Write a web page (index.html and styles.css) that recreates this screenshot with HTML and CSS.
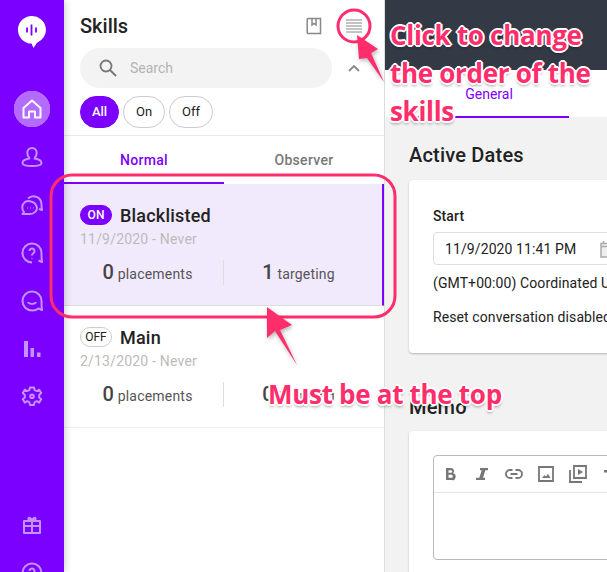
FILE: index.html
```html
<!DOCTYPE html>
<html lang="en">

<head>
    <meta charset="UTF-8">
    <meta name="viewport" content="width=device-width, initial-scale=1.0">
    <title>Skills</title>
    <link rel="stylesheet" href="styles.css">
</head>

<body>
    <div class="app">
        <!-- Main navigation -->
        <nav class="sidebar">
            <div class="logo">
                <svg width="30" height="34" viewBox="0 0 30 34">
                    <path d="M15 1a13.8 13.8 0 0 1 5 26.700L16.500 33 14.500 28.600A13.800 13.800 0 0 1 15 1z" fill="#fff" />
                    <path d="M10 12.500v5M14.500 9.500v11M19 12.500v5" stroke="#7b00ff" stroke-width="1.800" fill="none" />
                </svg>
            </div>
            <div class="nav-item active">
                <svg width="20" height="20" viewBox="0 0 20 20" class="nav-icon">
                    <path d="M1.500 9 10 1.500 18.500 9v9.500h-5.500v-6H7v6H1.500z" />
                </svg>
            </div>
            <div class="nav-item">
                <svg width="22" height="22" viewBox="0 0 22 22" class="nav-icon">
                    <path d="M11 2c3 0 4.700 2.300 4.700 5 0 2.300-1 4-2.200 5.500 3 .5 7 1.500 7 4.500 0 2-4 3-9.500 3s-9.500-1-9.500-3c0-3 4-4 7-4.500C7.300 11 6.300 9.300 6.300 7 6.300 4.300 8 2 11 2z" />
                </svg>
            </div>
            <div class="nav-item">
                <svg width="22" height="22" viewBox="0 0 22 22" class="nav-icon">
                    <path d="M7 4.500A8 8 0 0 1 20.500 10c0 2 0 4 .5 6l-3-1" />
                    <path d="M10 7.500a8 8 0 0 1 6 6.500c0 3-3 6-7 6H1.500l1.500-2a6.800 6.800 0 0 1 1-10 8 8 0 0 1 6-.5z" />
                    <path d="M6.500 14h.5M9.500 14h.5M12.500 14h.5" />
                </svg>
            </div>
            <div class="nav-item">
                <svg width="22" height="22" viewBox="0 0 22 22" class="nav-icon">
                    <path d="M11 20.500a9.500 9.500 0 1 1 9.500-9.500c0 3 0 6 .5 9l-3.500-1.500" />
                    <path d="M8.500 9a2.500 2.500 0 1 1 4 2c-1 .7-1.500 1.300-1.500 2.500M11 16v.5" />
                </svg>
            </div>
            <div class="nav-item">
                <svg width="22" height="22" viewBox="0 0 22 22" class="nav-icon">
                    <path d="M11 20.500a9.500 9.500 0 1 1 9.500-9.500c0 3 0 6 .5 9l-3.500-1.500A9.500 9.500 0 0 1 11 20.500z" />
                    <path d="M7 12c1 2.500 7 2.500 8 0" />
                </svg>
            </div>
            <div class="nav-item">
                <svg width="18" height="18" viewBox="0 0 18 18">
                    <path d="M1 1h4v16H1zM7.500 8h3.500v9H7.500zM14 12.500h3.500v4.500H14z" fill="#c294ff" />
                </svg>
            </div>
            <div class="nav-item">
                <svg width="22" height="22" viewBox="0 0 22 22" class="nav-icon">
                    <path d="M9 1.500h4l.6 2.600 2.300 1 2.300-1.400 2 3.400-2 1.800v2.500l2 1.800-2 3.400-2.300-1.400-2.300 1-.6 2.800H9l-.6-2.800-2.300-1-2.300 1.400-2-3.400 2-1.800V8.900l-2-1.800 2-3.400 2.300 1.400 2.300-1z" />
                    <circle cx="11" cy="10.200" r="1.800" />
                </svg>
            </div>
            <div class="nav-bottom">
                <div class="nav-item">
                    <svg width="18" height="18" viewBox="0 0 18 18" class="nav-icon">
                        <path d="M1 5h16v12H1zM1 10h16M9 5v12" />
                        <path d="M9 5C6 5 5 3.500 5.500 2.300S8 1.500 9 5c1-3.500 3-3.900 3.500-2.700S12 5 9 5z" />
                    </svg>
                </div>
                <div class="nav-item">
                    <svg width="22" height="22" viewBox="0 0 22 22" class="nav-icon">
                        <path d="M11 20.500a9.500 9.500 0 1 1 9.500-9.500c0 3 0 6 .5 9l-3.500-1.500" />
                        <path d="M8.500 9a2.500 2.500 0 1 1 4 2c-1 .7-1.500 1.300-1.500 2.500" />
                    </svg>
                </div>
            </div>
        </nav>

        <!-- Skill list -->
        <section class="skills-panel">
            <div class="panel-head">
                <h1>Skills</h1>
                <div class="panel-tools">
                    <svg width="16" height="18" viewBox="0 0 16 18" class="tool-icon">
                        <path d="M2 1.500h12.500v15H2a.8.800 0 0 1-.8-.8V2.300A.8.800 0 0 1 2 1.500z" />
                        <path d="M6 1.500v6.500l2-1.500 2 1.500V1.500" />
                    </svg>
                    <svg width="16" height="14" viewBox="0 0 16 14" class="tool-icon lines">
                        <path d="M0 1h16M0 4h16M0 7h16M0 10h16M0 13h16" />
                    </svg>
                </div>
            </div>
            <div class="search-row">
                <div class="search-box">
                    <svg width="18" height="18" viewBox="0 0 18 18" class="search-icon">
                        <circle cx="7" cy="7" r="5.500" />
                        <path d="m11 11 6 6" />
                    </svg>
                    <span>Search</span>
                </div>
                <svg width="12" height="7" viewBox="0 0 12 7" class="collapse-icon">
                    <path d="m1 6 5-5 5 5" />
                </svg>
            </div>
            <div class="filters">
                <span class="filter filter-all selected">All</span>
                <span class="filter filter-on">On</span>
                <span class="filter filter-off">Off</span>
            </div>
            <div class="tabs">
                <div class="tab current">Normal</div>
                <div class="tab">Observer</div>
            </div>

            <div class="skill selected">
                <div class="skill-title">
                    <span class="badge on">ON</span>
                    <span class="skill-name">Blacklisted</span>
                </div>
                <div class="skill-dates">11/9/2020 - Never</div>
                <div class="stats">
                    <div class="stat"><b>0</b> placements</div>
                    <div class="stat"><b>1</b> targeting</div>
                </div>
            </div>
            <div class="skill">
                <div class="skill-title">
                    <span class="badge">OFF</span>
                    <span class="skill-name">Main</span>
                </div>
                <div class="skill-dates">2/13/2020 - Never</div>
                <div class="stats">
                    <div class="stat"><b>0</b> placements</div>
                    <div class="stat"><b>0</b> targeting</div>
                </div>
            </div>
        </section>

        <!-- Skill detail -->
        <main class="detail">
            <div class="topbar"></div>
            <div class="detail-tabs">
                <div class="detail-tab">General</div>
            </div>
            <div class="detail-body">
                <h2>Active Dates</h2>
                <div class="card dates-card">
                    <div class="field-label">Start</div>
                    <div class="date-input">
                        <span>11/9/2020 11:41 PM</span>
                        <svg width="14" height="18" viewBox="0 0 14 18" class="calendar-icon">
                            <path d="M1 3.500h12v13.500H1zM3.500 1v3M10.500 1v3" />
                            <path d="M1 6.500h12" />
                        </svg>
                    </div>
                    <p>(GMT+00:00) Coordinated Universal Time</p>
                    <p>Reset conversation disabled</p>
                </div>
                <h2 class="memo-title">Memo</h2>
                <div class="card memo-card">
                    <div class="editor">
                        <div class="editor-tools">
                            <span class="editor-btn">
                                <svg width="14" height="14" viewBox="0 0 14 14" class="editor-icon">
                                    <path d="M3 1h5a3 3 0 0 1 2 5.300A3.300 3.300 0 0 1 8.500 13H3zM5.500 3.300v2.400H8a1.200 1.200 0 0 0 0-2.400zM5.500 7.800v3h2.800a1.500 1.500 0 0 0 0-3z" fill-rule="evenodd" />
                                </svg>
                            </span>
                            <span class="editor-btn">
                                <svg width="14" height="14" viewBox="0 0 14 14" class="editor-icon">
                                    <path d="M5 1h8v2.300h-2.700L8 10.700h2V13H1v-2.300h3.300l2.400-7.400H5z" />
                                </svg>
                            </span>
                            <span class="editor-btn">
                                <svg width="18" height="14" viewBox="0 0 18 14" class="editor-line">
                                    <path d="M7.500 3H5a4 4 0 0 0 0 8h2.500M10.500 3H13a4 4 0 0 1 0 8h-2.500M5.500 7h7" />
                                </svg>
                            </span>
                            <span class="editor-btn">
                                <svg width="16" height="16" viewBox="0 0 16 16" class="editor-line">
                                    <path d="M1 1h14v14H1z" />
                                    <path d="m4 12 2.500-3 1.500 1.500 2-2.500 2.500 4z" class="editor-fill" />
                                </svg>
                            </span>
                            <span class="editor-btn">
                                <svg width="18" height="18" viewBox="0 0 18 18" class="editor-line">
                                    <path d="M5 1h12v12H5z" />
                                    <path d="M1 5v12h12" />
                                    <path d="M9 4v6l5-3z" class="editor-fill" />
                                </svg>
                            </span>
                            <span class="editor-btn">
                                <svg width="14" height="14" viewBox="0 0 14 14" class="editor-icon">
                                    <path d="M1 3h12v2.500H8.500V13h-3V5.500H1z" />
                                </svg>
                            </span>
                        </div>
                        <div class="editor-area"></div>
                    </div>
                </div>
            </div>
        </main>

        <!-- Annotations drawn over the screenshot -->
        <svg class="marks" width="607" height="572" viewBox="0 0 607 572">
            <circle cx="354" cy="26" r="16" class="mark-line" />
            <rect x="51" y="175" width="344" height="142" rx="21" class="mark-line" />
            <path d="M357 35 378 49 371 53 384 82 367 58 359 59z" class="mark-fill" />
            <path d="M267 307 292 325 280 330 297 365 275 331 267 338z" class="mark-fill" />
        </svg>
        <div class="note note-order">Click to change<br>the order of the<br>skills</div>
        <div class="note note-top">Must be at the top</div>
    </div>
</body>

</html>
```

FILE: styles.css
```css
* {
    box-sizing: border-box;
}

body {
    margin: 0;
    font-family: Roboto, Arial, sans-serif;
    color: #222;
    background-color: #fff;
}

h1,
h2,
p {
    margin: 0;
}

.app {
    position: relative;
    display: flex;
    width: 607px;
    height: 572px;
    overflow: hidden;
}

/* Sidebar */
.sidebar {
    position: relative;
    z-index: 1;
    flex: 0 0 64px;
    display: flex;
    flex-direction: column;
    align-items: center;
    background-color: #7b00ff;
    box-shadow: 0 0 8px rgba(0, 0, 0, 0.25);
}

.logo {
    flex: none;
    height: 85px;
    padding-top: 15px;
}

.nav-item {
    flex: none;
    width: 48px;
    height: 48px;
    display: flex;
    align-items: center;
    justify-content: center;
}

.nav-item.active {
    background: radial-gradient(circle, #b46bff 18px, transparent 18.5px);
}

.nav-icon {
    fill: none;
    stroke: #c294ff;
    stroke-width: 2;
    stroke-linejoin: round;
}

.active .nav-icon {
    stroke: #fff;
}

.nav-bottom {
    flex: none;
    margin-top: 80px;
}

/* Skills panel */
.skills-panel {
    flex: 0 0 321px;
    min-width: 0;
    border-right: 1px solid #ddd;
    background-color: #fff;
}

.panel-head {
    height: 48px;
    padding: 15px 22px 0 16px;
    display: flex;
    justify-content: space-between;
}

.panel-head h1 {
    font-size: 20px;
    line-height: 23px;
    font-weight: 500;
}

.panel-tools {
    display: flex;
    gap: 24px;
    height: 22px;
    align-items: center;
}

.tool-icon {
    fill: none;
    stroke: #888;
    stroke-width: 1.500;
}

.tool-icon.lines {
    stroke-width: 1.200;
}

.search-row {
    display: flex;
    align-items: center;
    padding-left: 16px;
}

.search-box {
    width: 252px;
    height: 40px;
    padding-left: 19px;
    display: flex;
    align-items: center;
    gap: 13px;
    border-radius: 20px;
    background-color: #f3f3f3;
    color: #b4b4b4;
    font-size: 14px;
}

.search-icon {
    fill: none;
    stroke: #777;
    stroke-width: 1.800;
}

.collapse-icon {
    margin-left: 16px;
    fill: none;
    stroke: #888;
    stroke-width: 1.800;
}

.filters {
    display: flex;
    gap: 4px;
    padding: 8px 16px 7px;
    border-bottom: 1px solid #e8e8e8;
}

.filter {
    height: 32px;
    text-align: center;
    line-height: 30px;
    border: 1px solid #ccc;
    border-radius: 16px;
    font-size: 13px;
}

.filter-all {
    width: 39px;
}

.filter-on {
    width: 42px;
}

.filter-off {
    width: 44px;
}

.filter.selected {
    border-color: #7b00ff;
    background-color: #7b00ff;
    color: #fff;
    font-weight: 500;
}

.tabs {
    display: flex;
    height: 48px;
}

.tab {
    width: 160px;
    padding-top: 16px;
    text-align: center;
    font-size: 14px;
    line-height: 17px;
    font-weight: 500;
    letter-spacing: 0.3px;
    color: #777;
}

.tab.current {
    color: #7b00ff;
    border-bottom: 2px solid #7b00ff;
}

.skill {
    height: 122px;
    padding: 21px 0 0 16px;
    border-bottom: 1px solid #eee;
}

.skill.selected {
    background-color: #f1eafd;
    border-right: 2px solid #7b00ff;
    border-bottom-color: #ddd;
}

.skill-title {
    display: flex;
    align-items: center;
    gap: 8px;
    height: 20px;
}

.badge {
    width: 32px;
    height: 20px;
    line-height: 18px;
    text-align: center;
    border: 1px solid #ccc;
    border-radius: 10px;
    font-size: 12px;
}

.badge.on {
    border-color: #7b00ff;
    background-color: #7b00ff;
    color: #fff;
    font-weight: 500;
}

.skill-name {
    font-size: 18px;
    font-weight: 500;
    letter-spacing: 0.2px;
}

.skill-dates {
    margin-top: 6px;
    font-size: 14px;
    line-height: 17px;
    letter-spacing: 0.2px;
    color: #bbb;
}

.stats {
    display: flex;
    margin: 12px 0 0 -16px;
}

.stat {
    flex: 0 0 160px;
    height: 25px;
    line-height: 25px;
    text-align: center;
    font-size: 14px;
    letter-spacing: 0.2px;
    color: #555;
}

.stat:first-child {
    padding-left: 8px;
    border-right: 1px solid #ddd;
}

.stat:last-child {
    padding-right: 11px;
}

.stat b {
    font-size: 20px;
    font-weight: 500;
    color: #444;
}

/* Detail panel */
.detail {
    flex: 0 0 222px;
    min-width: 0;
    background-color: #f2f2f2;
}

.topbar {
    height: 70px;
    background-color: #343a45;
}

.detail-tabs {
    height: 47px;
    padding-left: 24px;
    background-color: #fff;
}

.detail-tab {
    width: 160px;
    height: 48px;
    padding-top: 16px;
    text-align: center;
    font-size: 14px;
    line-height: 16px;
    color: #7b00ff;
    border-bottom: 2px solid #7b00ff;
    position: relative;
}

.detail-body {
    width: 360px;
    padding: 26px 0 0 24px;
}

.detail-body h2 {
    font-size: 20px;
    line-height: 24px;
    font-weight: 500;
    letter-spacing: 0.2px;
}

.card {
    margin-top: 13px;
    padding: 24px;
    border-radius: 4px;
    background-color: #fff;
    box-shadow: 0 1px 2px rgba(0, 0, 0, 0.25);
}

.dates-card {
    height: 173px;
    font-size: 14px;
    letter-spacing: 0.1px;
}

.field-label {
    font-size: 14px;
    line-height: 24px;
    font-weight: 500;
}

.date-input {
    height: 33px;
    margin-top: 4px;
    padding-left: 11px;
    display: flex;
    align-items: center;
    gap: 24px;
    border: 1px solid #ddd;
    border-radius: 4px;
    font-size: 14px;
}

.calendar-icon {
    flex: none;
    fill: #eee;
    stroke: #aaa;
    stroke-width: 1.500;
}

.dates-card p {
    margin-top: 9px;
    line-height: 25px;
    white-space: nowrap;
}

.date-input + p {
    margin-top: 6px;
}

.memo-title {
    margin-top: 42px;
}

.memo-card {
    margin-top: 12px;
    height: 160px;
}

.editor {
    height: 105px;
    border: 1px solid #bbb;
    border-radius: 4px;
}

.editor-tools {
    height: 37px;
    display: flex;
    align-items: center;
    border-bottom: 1px solid #e5e5e5;
}

.editor-btn {
    flex: 0 0 32px;
    display: flex;
    align-items: center;
    justify-content: center;
}

.editor-icon {
    flex: none;
    fill: #777;
}

.editor-line {
    flex: none;
    fill: none;
    stroke: #777;
    stroke-width: 1.800;
}

.editor-fill {
    fill: #777;
    stroke: none;
}

/* Annotations */
.marks {
    position: absolute;
    top: 0;
    left: 0;
    z-index: 2;
}

.mark-line {
    fill: none;
    stroke: #ff2d6b;
    stroke-width: 3;
}

.mark-fill {
    fill: #ff2d6b;
    filter: drop-shadow(1px 2px 2px rgba(0, 0, 0, 0.3));
}

.note {
    position: absolute;
    z-index: 3;
    font-family: "Open Sans", Arial, sans-serif;
    font-size: 26px;
    font-weight: 700;
    line-height: 38px;
    letter-spacing: -0.3px;
    white-space: nowrap;
    color: #ff2d6b;
    text-shadow: -2px 0 0 #fff, 2px 0 0 #fff, 0 -2px 0 #fff, 0 2px 0 #fff, -1px -1px 0 #fff, 1px -1px 0 #fff, -1px 1px 0 #fff, 1px 1px 0 #fff, 0 3px 3px rgba(0, 0, 0, 0.35);
}

.note-order {
    top: 16px;
    left: 390px;
}

.note-top {
    top: 375px;
    left: 268px;
}
```
